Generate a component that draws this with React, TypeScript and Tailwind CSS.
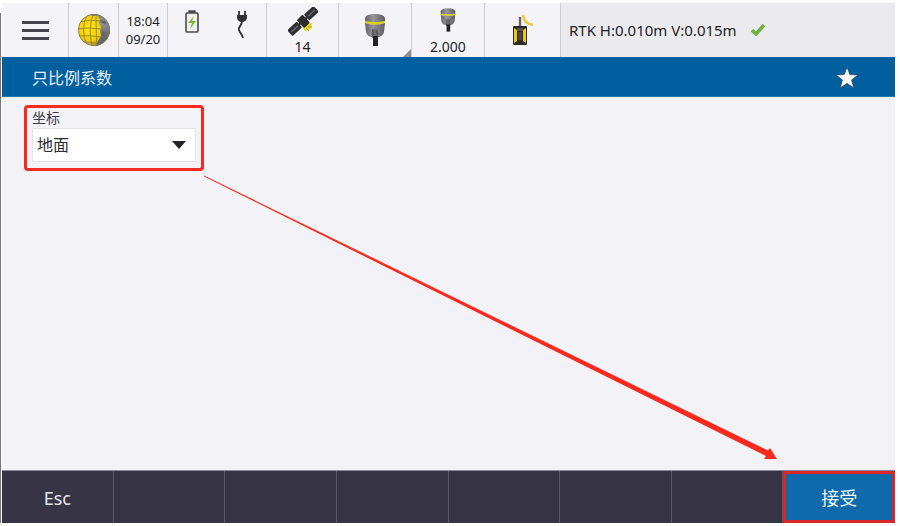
import type { ReactNode } from 'react'

const SOFT_KEYS = ['Esc', '', '', '', '', '', '', '接受']

function StatusCell({ className, children }: { className: string; children?: ReactNode }) {
  return (
    <div className={`relative shrink-0 border-r border-[#cdcdd3] ${className}`}>{children}</div>
  )
}

function GlobeIcon() {
  return (
    <svg width="34" height="34" viewBox="0 0 34 34" aria-hidden="true">
      <defs>
        <radialGradient id="globe" cx="0.36" cy="0.45" r="0.6">
          <stop offset="0" stopColor="#ffe80c" />
          <stop offset="0.65" stopColor="#f2cd08" />
          <stop offset="1" stopColor="#9a8024" />
        </radialGradient>
        <linearGradient id="globeShade" x1="0" y1="0" x2="0.4" y2="1">
          <stop offset="0" stopColor="#77777a" />
          <stop offset="0.5" stopColor="#919194" />
          <stop offset="1" stopColor="#5c5b60" />
        </linearGradient>
        <clipPath id="globeClip">
          <circle cx="17" cy="17" r="16" />
        </clipPath>
      </defs>
      <g clipPath="url(#globeClip)">
        <circle cx="17" cy="17" r="16" fill="url(#globe)" />
        <path
          d="M2 9Q13 6 24 8M0 16Q12 14 24 16M1 23Q12 22 24 24M5 29Q14 29 21 30M10 2Q3 17 10 32M16 1Q11 17 15 33M19 4Q19 18 20 33"
          fill="none"
          stroke="#a38a25"
          strokeWidth="1"
        />
        <path d="M10 0L16 3L21 3L23 6L22 10L24 14L23 18L24 23L21 28L19 34H34V0Z" fill="url(#globeShade)" />
        <path d="M23 7l5 1 2 3-5-1zM25 18l4 1-2 6-3 3z" fill="#636367" />
      </g>
      <circle cx="17" cy="17" r="15.6" fill="none" stroke="#7d766a" strokeWidth="0.8" />
    </svg>
  )
}

function BatteryIcon() {
  return (
    <svg width="14" height="23" viewBox="0 0 14 23" aria-hidden="true">
      <path d="M4 3V1h6v2" fill="#4a4a50" stroke="#4a4a50" strokeWidth="1.4" />
      <rect x="1" y="3" width="12" height="19" rx="1" fill="#eef1ec" stroke="#4a4a50" strokeWidth="1.6" />
      <path d="M9 6L3 13h4l-2 6 6-8H7z" fill="#79b530" />
    </svg>
  )
}

function PlugIcon() {
  return (
    <svg width="12" height="30" viewBox="0 0 12 30" aria-hidden="true">
      <path d="M3 1v5M9 1v5" stroke="#2f2f34" strokeWidth="1.8" />
      <path d="M1 5h10v2q0 4-4 5H5q-4-1-4-5z" fill="#2f2f34" />
      <path d="M6 11C6 16 2 16 3 20C4 23 6 24 7 28" fill="none" stroke="#2f2f34" strokeWidth="1.8" />
    </svg>
  )
}

function SatelliteIcon() {
  return (
    <svg width="30" height="30" viewBox="0 0 30 30" aria-hidden="true">
      <path d="M17 24q7-1 7-8l-5 1-4 4z" fill="#e5d51b" />
      <path d="M18 21l3 3M20 20l4 0" stroke="#a69b20" strokeWidth="1" />
      <g transform="rotate(-43 15 14)">
        <rect x="-3" y="10" width="13" height="8" rx="1" fill="#303034" />
        <rect x="20" y="10" width="13" height="8" rx="1" fill="#303034" />
        <path d="M-1 14H8M22 14H31" stroke="#6b6b70" strokeWidth="1.4" />
        <path d="M9 14h12" stroke="#303034" strokeWidth="2" />
        <rect x="11" y="9" width="8" height="11" rx="1" fill="#2b2a2c" />
      </g>
    </svg>
  )
}

function ReceiverIcon({ className }: { className: string }) {
  return (
    <svg viewBox="0 0 22 32" className={className} aria-hidden="true">
      <defs>
        <linearGradient id="receiver" x1="0" x2="1">
          <stop offset="0" stopColor="#626266" />
          <stop offset="0.4" stopColor="#98989b" />
          <stop offset="1" stopColor="#5c5c60" />
        </linearGradient>
      </defs>
      <path d="M1 4Q2 0 11 0T21 4V9Q11 12 1 9z" fill="url(#receiver)" />
      <path d="M1 9Q11 12 21 9L20 18Q19 22 15 23H7Q3 22 2 18z" fill="url(#receiver)" />
      <path d="M1 7Q11 9 21 7V9Q11 12 1 9z" fill="#d9cf22" />
      <path d="M8 15h6v9H8z" fill="#6e6e72" />
      <path d="M9 16v7M13 16v7" stroke="#4b4b50" strokeWidth="1" />
      <path d="M9 22h5v10H9z" fill="#242428" />
    </svg>
  )
}

function RadioIcon() {
  return (
    <svg width="22" height="32" viewBox="0 0 22 32" aria-hidden="true">
      <path d="M8 3v10" stroke="#66666a" strokeWidth="2.4" />
      <path d="M11 1Q12 10 21 11" fill="none" stroke="#f4c83a" strokeWidth="2.4" />
      <rect x="1" y="12" width="14" height="19" rx="1" fill="#2c2b26" />
      <path d="M2 14l3 2v11l-3 2zM14 14l-3 2v11l3 2z" fill="#f0c80f" />
      <path d="M5 14h6v3H5z" fill="#55555a" />
      <path d="M6 18h4v8H6z" fill="#46464c" />
    </svg>
  )
}

function StatusBar() {
  return (
    <header className="flex h-[54px] bg-[#f4f4f8] text-[#222228]">
      <StatusCell className="w-[67px]">
        <button
          type="button"
          aria-label="Menu"
          className="flex h-full w-full flex-col items-center justify-center gap-[5px]"
        >
          <span className="h-[3px] w-[27px] bg-[#46464c]" />
          <span className="h-[3px] w-[27px] bg-[#46464c]" />
          <span className="h-[3px] w-[27px] bg-[#46464c]" />
        </button>
      </StatusCell>
      <StatusCell className="flex w-[50px] items-center justify-center">
        <GlobeIcon />
      </StatusCell>
      <StatusCell className="flex w-[49px] flex-col items-center justify-center text-[13px] leading-[18px]">
        <span>18:04</span>
        <span>09/20</span>
      </StatusCell>
      <StatusCell className="flex w-[99px] justify-between pt-[7px] pr-[18px] pl-[17px]">
        <BatteryIcon />
        <PlugIcon />
      </StatusCell>
      <StatusCell className="flex w-[72px] flex-col items-center justify-between pt-1 pb-[2px]">
        <SatelliteIcon />
        <span className="text-[14px] leading-4">14</span>
      </StatusCell>
      <StatusCell className="flex w-[73px] items-center justify-center">
        <ReceiverIcon className="h-8 w-[22px]" />
        <svg width="8" height="8" viewBox="0 0 8 8" className="absolute right-0 bottom-0" aria-hidden="true">
          <path d="M8 0v8H0z" fill="#8e8e94" />
        </svg>
      </StatusCell>
      <StatusCell className="flex w-[73px] flex-col items-center justify-between pt-[5px] pb-[2px]">
        <ReceiverIcon className="h-6 w-4" />
        <span className="text-[14px] leading-4">2.000</span>
      </StatusCell>
      <StatusCell className="flex w-[76px] items-center justify-center">
        <RadioIcon />
      </StatusCell>
      <div className="flex grow items-center gap-[14px] bg-[#ebebee] pl-2 text-[15px]">
        <span className="whitespace-nowrap">RTK H:0.010m V:0.015m</span>
        <svg width="14" height="12" viewBox="0 0 14 12" aria-hidden="true">
          <path d="M1 6l4 4L13 1" fill="none" stroke="#72b043" strokeWidth="3.6" />
        </svg>
      </div>
    </header>
  )
}

export default function App() {
  return (
    <div className="flex min-h-screen bg-white pt-[3px] pr-[5px] pb-[3px] font-['Noto_Sans','Noto_Sans_CJK_SC',sans-serif]">
      <div className="mt-[10px] mr-px w-px shrink-0 bg-[#72767e]" />
      <div className="flex min-w-0 grow flex-col">
        <StatusBar />

        <div className="flex h-10 items-center justify-between border-b border-[#2878a8] bg-[#005f9e] pr-9 pl-[30px]">
          <h1 className="pt-[2px] text-base text-[#e6f0f8]">只比例系数</h1>
          <button type="button" aria-label="Favorite" className="pt-[2px]">
            <svg width="24" height="24" viewBox="0 0 24 24" aria-hidden="true">
              <path
                d="M12 1l2.8 7.6 8.2.3-6.4 5 2.2 8L12 17.4 5.2 21.9l2.2-8L1 8.9l8.2-.3z"
                fill="#fff"
                stroke="#33475a"
                strokeWidth="0.8"
              />
            </svg>
          </button>
        </div>

        <main className="relative grow bg-[#f3f2f7]">
          <div className="px-[22px] pt-2">
            <div className="w-[180px] rounded-[4px] border-[3px] border-[#f42a22] px-[5px] pb-[6px]">
              <label htmlFor="coordinates" className="block text-sm leading-5 text-[#3c3c46]">
                坐标
              </label>
              <div className="relative">
                <select
                  id="coordinates"
                  className="block h-[34px] w-full appearance-none border border-[#e4e4e9] bg-white px-1 text-base text-[#2c2c34]"
                >
                  <option>地面</option>
                </select>
                <svg
                  width="14"
                  height="8"
                  viewBox="0 0 14 8"
                  className="pointer-events-none absolute top-[13px] right-[10px]"
                  aria-hidden="true"
                >
                  <path d="M0 0h14L7 8z" fill="#23232b" />
                </svg>
              </div>
            </div>
          </div>
          <svg
            viewBox="0 0 893 373"
            preserveAspectRatio="none"
            className="pointer-events-none absolute inset-0 h-full w-full"
            aria-hidden="true"
          >
            <path d="M202 78.5L766 353.5L768 351L775 362L762 362L764 359L202 79.5z" fill="#fb2a1e" />
          </svg>
        </main>

        <footer className="grid h-[53px] grid-cols-8 border-t border-[#8c8b96] bg-[#373545]">
          {SOFT_KEYS.map((label, i) =>
            label === '接受' ? (
              <button
                key={i}
                type="button"
                className="rounded-[2px] border-[3px] border-[#d8262b] bg-[#0f6aab] pt-[2px] text-lg text-[#eef5fb]"
              >
                {label}
              </button>
            ) : (
              <button
                key={i}
                type="button"
                disabled={!label}
                className="border-r border-[#5a5967] pt-[2px] text-lg text-[#e6e6ee]"
              >
                {label}
              </button>
            ),
          )}
        </footer>
      </div>
    </div>
  )
}
